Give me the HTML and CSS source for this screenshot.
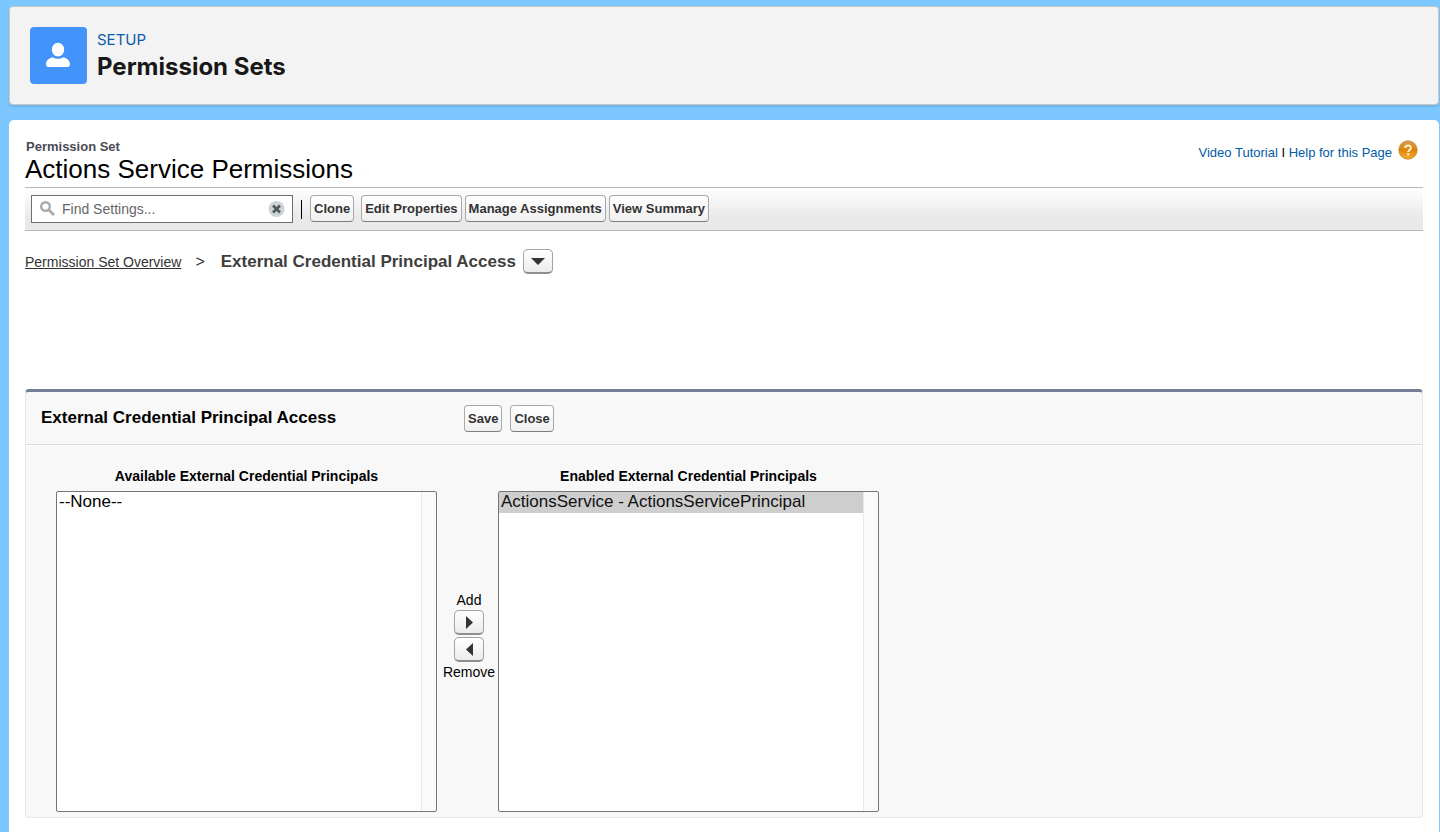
FILE: index.html
```html
<!DOCTYPE html>
<html lang="en">
<head>
<meta charset="utf-8">
<title>Permission Sets</title>
<link rel="stylesheet" href="styles.css">
</head>
<body>
<header class="page-header">
  <svg class="header-icon" viewBox="0 0 57 57" aria-hidden="true">
    <rect width="57" height="57" rx="4" fill="#4294fb"/>
    <ellipse cx="28" cy="22.700" rx="6.200" ry="6.900" fill="#fff"/>
    <path d="M22.500 30.200Q28 33.400 33.500 30.200C37 31.200 40 33.500 40 37.300Q40 40 37.200 40H18.800Q16 40 16 37.300C16 33.500 19 31.200 22.500 30.200Z" fill="#fff"/>
  </svg>
  <div class="header-text">
    <span class="header-kicker">SETUP</span>
    <h1 class="header-title">Permission Sets</h1>
  </div>
</header>

<main class="content">
  <div class="title-row">
    <div class="title-block">
      <span class="title-kicker">Permission Set</span>
      <h2 class="title">Actions Service Permissions</h2>
    </div>
    <div class="help-links">
      <span><a href="#">Video Tutorial</a> I <a href="#">Help for this Page</a></span>
      <svg class="help-icon" viewBox="0 0 20 20" aria-hidden="true">
        <defs>
          <linearGradient id="orb" x1="0" y1="0" x2="0" y2="1">
            <stop offset="0" stop-color="#d9a04f"/><stop offset=".5" stop-color="#de8408"/><stop offset="1" stop-color="#f8b030"/>
          </linearGradient>
        </defs>
        <circle cx="10" cy="10" r="9.200" fill="url(#orb)" stroke="#b87822" stroke-width=".7"/>
        <path d="M7.200 8.100C7.200 4.600 12.900 4.600 12.900 7.900C12.900 9.900 10.200 9.800 10.200 12" fill="none" stroke="#fff0cf" stroke-width="2"/>
        <rect x="9.100" y="13.200" width="2.200" height="2.200" fill="#fff0cf"/>
      </svg>
    </div>
  </div>

  <div class="toolbar">
    <label class="search">
      <svg class="search-icon" viewBox="0 0 16 16" aria-hidden="true">
        <circle cx="6" cy="5.500" r="4.300" fill="none" stroke="#a8acac" stroke-width="2.400"/>
        <path d="M9.200 8.700L14.500 14" stroke="#a8acac" stroke-width="3"/>
      </svg>
      <input class="search-input" type="text" placeholder="Find Settings..." aria-label="Find Settings">
      <button class="search-clear" type="button" aria-label="Clear">
        <svg viewBox="0 0 17 17" width="17" height="17" aria-hidden="true">
          <circle cx="8.500" cy="8" r="8" fill="#cdd4d6"/>
          <path d="M5 4.500L12 11.500M12 4.500L5 11.500" stroke="#50575a" stroke-width="2.600"/>
        </svg>
      </button>
    </label>
    <span class="divider"></span>
    <button class="btn btn-first" type="button">Clone</button>
    <button class="btn" type="button">Edit Properties</button>
    <button class="btn" type="button">Manage Assignments</button>
    <button class="btn" type="button">View Summary</button>
  </div>

  <nav class="breadcrumb">
    <a class="crumb-link" href="#">Permission Set Overview</a>
    <span class="crumb-sep">&gt;</span>
    <strong class="crumb-current">External Credential Principal Access</strong>
    <button class="icon-btn" type="button" aria-label="Choose section">
      <svg viewBox="0 0 14 8" width="14" height="8" aria-hidden="true"><path d="M0 1H14L7 8Z" fill="#333"/></svg>
    </button>
  </nav>

  <section class="panel">
    <div class="panel-head">
      <h3 class="panel-title">External Credential Principal Access</h3>
      <button class="btn" type="button">Save</button>
      <button class="btn" type="button">Close</button>
    </div>
    <div class="picker">
      <div class="picker-col">
        <label class="picker-label" for="available">Available External Credential Principals</label>
        <select class="picker-list" id="available" size="14" multiple>
          <option>--None--</option>
        </select>
      </div>
      <div class="picker-actions">
        <span>Add</span>
        <button class="icon-btn" type="button" aria-label="Add">
          <svg viewBox="0 0 8 14" width="8" height="14" aria-hidden="true"><path d="M1 1L8 7.500L1 14Z" fill="#333"/></svg>
        </button>
        <button class="icon-btn" type="button" aria-label="Remove">
          <svg viewBox="0 0 8 14" width="8" height="14" aria-hidden="true"><path d="M8 1L1 7.500L8 14Z" fill="#333"/></svg>
        </button>
        <span>Remove</span>
      </div>
      <div class="picker-col">
        <label class="picker-label" for="enabled">Enabled External Credential Principals</label>
        <select class="picker-list" id="enabled" size="14" multiple>
          <option selected>ActionsService - ActionsServicePrincipal</option>
        </select>
      </div>
    </div>
  </section>
</main>
</body>
</html>
```
FILE: styles.css
```css
* { box-sizing: border-box; }

body {
  display: flex;
  flex-direction: column;
  gap: 15px;
  min-height: 100vh;
  margin: 0;
  padding: 6px 1px 0 9px;
  background: #7cc7ff;
  color: #000;
  font-family: "Liberation Sans", Arial, sans-serif;
}

h1, h2, h3 { margin: 0; }
button, input, select { font-family: inherit; }

.page-header {
  display: flex;
  gap: 10px;
  padding: 20px;
  border: 1px solid #c9c7c5;
  border-radius: 4px;
  background: #f3f3f3;
  box-shadow: 0 2px 2px rgba(0, 0, 0, 0.1);
}
.header-icon { width: 57px; height: 57px; }
.header-text {
  display: flex;
  flex-direction: column;
  font-family: Inter, sans-serif;
}
.header-kicker { color: #0b5cab; font-size: 15px; line-height: 25px; }
.header-title { color: #181818; font-size: 24px; line-height: 30px; font-weight: 700; }

.content {
  flex: 1;
  padding: 18px 16px 14px;
  border-radius: 5px 5px 0 0;
  background: #fff;
}

.title-row {
  display: flex;
  justify-content: space-between;
  align-items: flex-start;
}
.title-block { display: flex; flex-direction: column; padding-bottom: 5px; }
.title-kicker {
  padding-left: 1px;
  color: #4a4a56;
  font-size: 13px;
  font-weight: 700;
  line-height: 18px;
}
.title { font-size: 26px; font-weight: 400; line-height: 26px; }
.help-links {
  display: flex;
  align-items: center;
  gap: 6px;
  padding: 1px 5px 0 0;
  font-size: 13px;
}
.help-links span { padding-top: 6px; }
.help-links a { color: #015ba7; text-decoration: none; }
.help-icon { width: 20px; height: 20px; }

.toolbar {
  display: flex;
  align-items: flex-start;
  gap: 3px;
  padding: 7px 6px;
  border-top: 1px solid #b8b8b8;
  border-bottom: 1px solid #b8b8b8;
  background: linear-gradient(#fff, #e9e9e9 70%);
}
.search {
  display: flex;
  align-items: center;
  width: 262px;
  height: 28px;
  padding: 0 7px;
  border: 1px solid #6e6e6e;
  background: #fff;
}
.search-icon { width: 17px; height: 16px; }
.search-input {
  flex: 1;
  min-width: 0;
  padding: 0 6px;
  border: 0;
  outline: 0;
  background: none;
  font-size: 14px;
}
.search-input::placeholder { color: #666; }
.search-clear { display: flex; padding: 0; border: 0; background: none; }
.divider { width: 1px; height: 19px; margin: 5px 5px 0; background: #000; }

.btn {
  height: 27px;
  padding: 0 3px;
  border: 1px solid #a9a9a9;
  border-bottom-color: #7f7f7f;
  border-radius: 4px;
  background: linear-gradient(#fff, #f0f0f0);
  color: #333;
  font-size: 13px;
  font-weight: 700;
  white-space: nowrap;
}
.btn-first { margin-right: 4px; }

.breadcrumb {
  display: flex;
  align-items: center;
  padding-top: 18px;
  color: #333;
}
.crumb-link { color: #333; font-size: 14px; }
.crumb-sep { padding: 0 16px 0 14px; font-size: 16px; }
.crumb-current { color: #3e3e3c; font-size: 17px; }
.icon-btn {
  display: flex;
  align-items: center;
  justify-content: center;
  width: 30px;
  height: 25px;
  padding: 0;
  border: 1px solid #a3a3a3;
  border-bottom: 2px solid #8e8e8e;
  border-radius: 5px;
  background: linear-gradient(#fff, #ececec);
}
.breadcrumb .icon-btn { margin-left: 7px; }

.panel {
  margin-top: 115px;
  border: 1px solid #e8e8e8;
  border-top: 3px solid #747e96;
  border-radius: 4px;
  background: #f8f8f8;
}
.panel-head {
  display: flex;
  align-items: center;
  gap: 8px;
  padding: 13px 15px 12px;
  border-bottom: 1px solid #dbdbdb;
  box-shadow: 0 1px 0 #fff;
}
.panel-title { width: 415px; padding-bottom: 2px; font-size: 17px; line-height: 20px; }
.picker {
  display: flex;
  padding: 22px 30px 5px;
}
.picker-col {
  display: flex;
  flex-direction: column;
  align-items: center;
  gap: 6px;
}
.picker-label { font-size: 14px; font-weight: 700; line-height: 18px; }
.picker-list {
  width: 381px;
  height: 321px;
  padding: 0 15px 0 0;
  border: 1px solid #767676;
  border-radius: 2px;
  outline: 0;
  background: linear-gradient(to left, #fafafa 14px, #e8e8e8 14px, #e8e8e8 15px, #fff 15px);
  color: #000;
  font-size: 17px;
  overflow: hidden;
}
.picker-list option { min-height: 21px; padding: 0 2px 1px; line-height: 20px; }
.picker-list option:checked {
  background: linear-gradient(#cecece, #cecece);
  color: #101010;
}
.picker-actions {
  display: flex;
  flex-direction: column;
  align-items: center;
  gap: 2px;
  width: 61px;
  padding: 125px 0 0 3px;
  font-size: 14px;
  line-height: 16px;
}
```
